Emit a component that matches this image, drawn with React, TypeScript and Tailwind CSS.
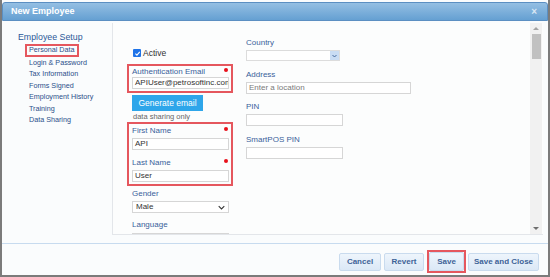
import React from "react";

const navItems = ["Login & Password", "Tax Information", "Forms Signed", "Employment History", "Training", "Data Sharing"];

function Label({ text, required, className = "" }: { text: string; required?: boolean; className?: string }) {
    return (
        <div className={`h-[10px] flex items-center justify-between text-[8px] leading-[10px] text-[#3a5f9b] ${className}`}>
            <span>{text}</span>
            {required && <span className="w-[4px] h-[4px] rounded-full bg-[#e8101a] mr-[1px] -mt-[4px]" />}
        </div>
    );
}

function Input({ value, placeholder, className = "" }: { value?: string; placeholder?: string; className?: string }) {
    return (
        <div className={`h-[12px] border border-[#d6d6d6] bg-white px-[2px] flex items-center overflow-hidden whitespace-nowrap text-[8px] ${className}`}>
            {value ? <span className="text-[#333]">{value}</span> : <span className="text-[#7a7a7a]">{placeholder}</span>}
        </div>
    );
}

export default function App() {
    return (
        <div className="w-[550px] h-[277px] bg-[#f5f6f7] overflow-hidden" style={{ fontFamily: '"Liberation Sans", Arial, sans-serif' }}>
            <div className="w-full h-full border-x-2 border-b-2 border-[#7b7b7b] bg-[#fafcfd] flex flex-col">
                {/* Title bar */}
                <div className="mt-[2px] h-[19px] rounded-t-[3px] border border-[#5b8fc2] bg-gradient-to-b from-[#94bfe3] to-[#65a0d2] flex items-center justify-between pl-[8px] pr-[10px]">
                    <span className="text-[9px] font-bold text-white">New Employee</span>
                    <span className="text-[10px] leading-none text-[#d9e7f4] font-bold">×</span>
                </div>

                <div className="flex h-[222px]">
                    {/* Left nav */}
                    <div className="w-[110px] pt-[10px] pl-[16px]">
                        <div className="h-[12px] leading-[12px] text-[8.8px] text-[#2b5898] whitespace-nowrap">Employee Setup</div>
                        <div className="mt-[1px] ml-[7px] w-[54px] h-[13px] border-2 border-[#e5575e] pl-[2px] flex items-center text-[7.2px] text-[#2b4f8a] whitespace-nowrap">
                            Personal Data
                        </div>
                        {navItems.map((item) => (
                            <div key={item} className="pl-[11px] h-[11.4px] leading-[11.4px] text-[7.2px] text-[#2b4f8a] whitespace-nowrap">
                                {item}
                            </div>
                        ))}
                    </div>

                    {/* Content panel */}
                    <div className="mt-[2px] h-[212px] w-[431px] border-l border-b border-[#e3e6ea] bg-[#fcfdfd] flex">
                        <div className="flex-1 overflow-hidden flex pl-[14px]">
                            {/* Left column */}
                            <div className="w-[106px] shrink-0">
                                <div className="mt-[25px] h-[10px] flex items-center pl-[6px] gap-[2px]">
                                    <span className="w-[8px] h-[8px] rounded-[1px] bg-[#1e73e8] flex items-center justify-center">
                                        <svg viewBox="0 0 10 10" className="w-[7px] h-[7px]">
                                            <path d="M2 5.2 L4.2 7.4 L8.2 2.6" stroke="white" strokeWidth="1.6" fill="none" />
                                        </svg>
                                    </span>
                                    <span className="text-[8.5px] text-[#333]">Active</span>
                                </div>

                                <div className="mt-[6px] h-[29px] border-2 border-[#e5575e] pl-[3px] pr-[2px] pt-[1px]">
                                    <Label text="Authentication Email" required />
                                    <Input value="APIUser@petrosoftinc.com" className="text-[7.9px]" />
                                </div>

                                <div className="mt-[2px] ml-[5px] w-[71px] h-[16px] bg-[#2ea6ea] flex items-center justify-center text-[8.5px] text-white">
                                    Generate email
                                </div>
                                <div className="mt-[1px] pl-[6px] h-[10px] leading-[10px] text-[7.5px] text-[#666]">data sharing only</div>

                                <div className="h-[64px] border-2 border-[#e5575e] pl-[3px] pr-[2px] pt-[2px]">
                                    <Label text="First Name" required />
                                    <Input value="API" className="mt-[2px]" />
                                    <Label text="Last Name" required className="mt-[8px]" />
                                    <Input value="User" className="mt-[2px]" />
                                </div>

                                <div className="pl-[5px] pr-[4px]">
                                    <Label text="Gender" className="mt-[3px]" />
                                    <div className="mt-[2px] h-[12px] border border-[#d6d6d6] bg-white px-[3px] flex items-center justify-between text-[8px] text-[#333]">
                                        <span>Male</span>
                                        <svg viewBox="0 0 10 6" className="w-[7px] h-[5px]">
                                            <path d="M1 1 L5 5 L9 1" stroke="#333" strokeWidth="1.5" fill="none" />
                                        </svg>
                                    </div>
                                    <Label text="Language" className="mt-[7px]" />
                                    <div className="mt-[3px] h-[12px] border border-[#d6d6d6] bg-white" />
                                </div>
                            </div>

                            {/* Right column */}
                            <div className="ml-[13px] w-[170px] shrink-0">
                                <Label text="Country" className="mt-[15px]" />
                                <div className="mt-[2px] w-[94px] h-[11px] border border-[#dcdcdc] bg-white flex justify-end">
                                    <span className="w-[9px] h-full bg-[#c9dcf3] flex items-center justify-center">
                                        <svg viewBox="0 0 10 6" className="w-[5px] h-[4px]">
                                            <path d="M1 1 L5 5 L9 1" stroke="#3b5f95" strokeWidth="1.8" fill="none" />
                                        </svg>
                                    </span>
                                </div>
                                <Label text="Address" className="mt-[9px]" />
                                <Input placeholder="Enter a location" className="mt-[2px] w-[165px] h-[11px]" />
                                <Label text="PIN" className="mt-[8px]" />
                                <Input className="mt-[2px] w-[97px] h-[11px]" />
                                <Label text="SmartPOS PIN" className="mt-[9px]" />
                                <Input className="mt-[2px] w-[97px] h-[11px]" />
                            </div>
                        </div>

                        {/* Scrollbar */}
                        <div className="w-[12px] h-full bg-[#f1f1f1] flex flex-col items-center mr-[1px]">
                            <span className="mt-[4px] w-0 h-0 border-x-[3px] border-x-transparent border-b-[3px] border-b-[#a3a3a3]" />
                            <span className="mt-[4px] w-[9px] h-[25px] bg-[#c1c1c1]" />
                            <span className="mt-auto mb-[4px] w-0 h-0 border-x-[3px] border-x-transparent border-t-[3px] border-t-[#6e6e6e]" />
                        </div>
                    </div>
                </div>

                {/* Footer */}
                <div className="border-t border-[#c7dbef] flex-1 flex items-start justify-end pr-[9px] pt-[6px]">
                    <div className="flex items-center gap-[3px]">
                        {["Cancel", "Revert"].map((b) => (
                            <div key={b} className={`${b === "Cancel" ? "w-[42px]" : "w-[40px]"} h-[18px] rounded-[2px] border border-[#c9dbee] bg-gradient-to-b from-[#eef5fc] to-[#dbe8f6] flex items-center justify-center text-[8px] font-bold text-[#3d6297]`}>
                                {b}
                            </div>
                        ))}
                        <div className="w-[39px] h-[23px] border-2 border-[#e5575e] flex items-center justify-center">
                            <div className="w-[35px] h-[19px] rounded-[2px] border border-[#c9dbee] bg-gradient-to-b from-[#eef5fc] to-[#dbe8f6] flex items-center justify-center text-[8px] font-bold text-[#3d6297]">
                                Save
                            </div>
                        </div>
                        <div className="-ml-[1px] w-[71px] h-[18px] rounded-[2px] border border-[#c9dbee] bg-gradient-to-b from-[#eef5fc] to-[#dbe8f6] flex items-center justify-center text-[8px] font-bold text-[#3d6297]">
                            Save and Close
                        </div>
                    </div>
                </div>
            </div>
        </div>
    );
}
